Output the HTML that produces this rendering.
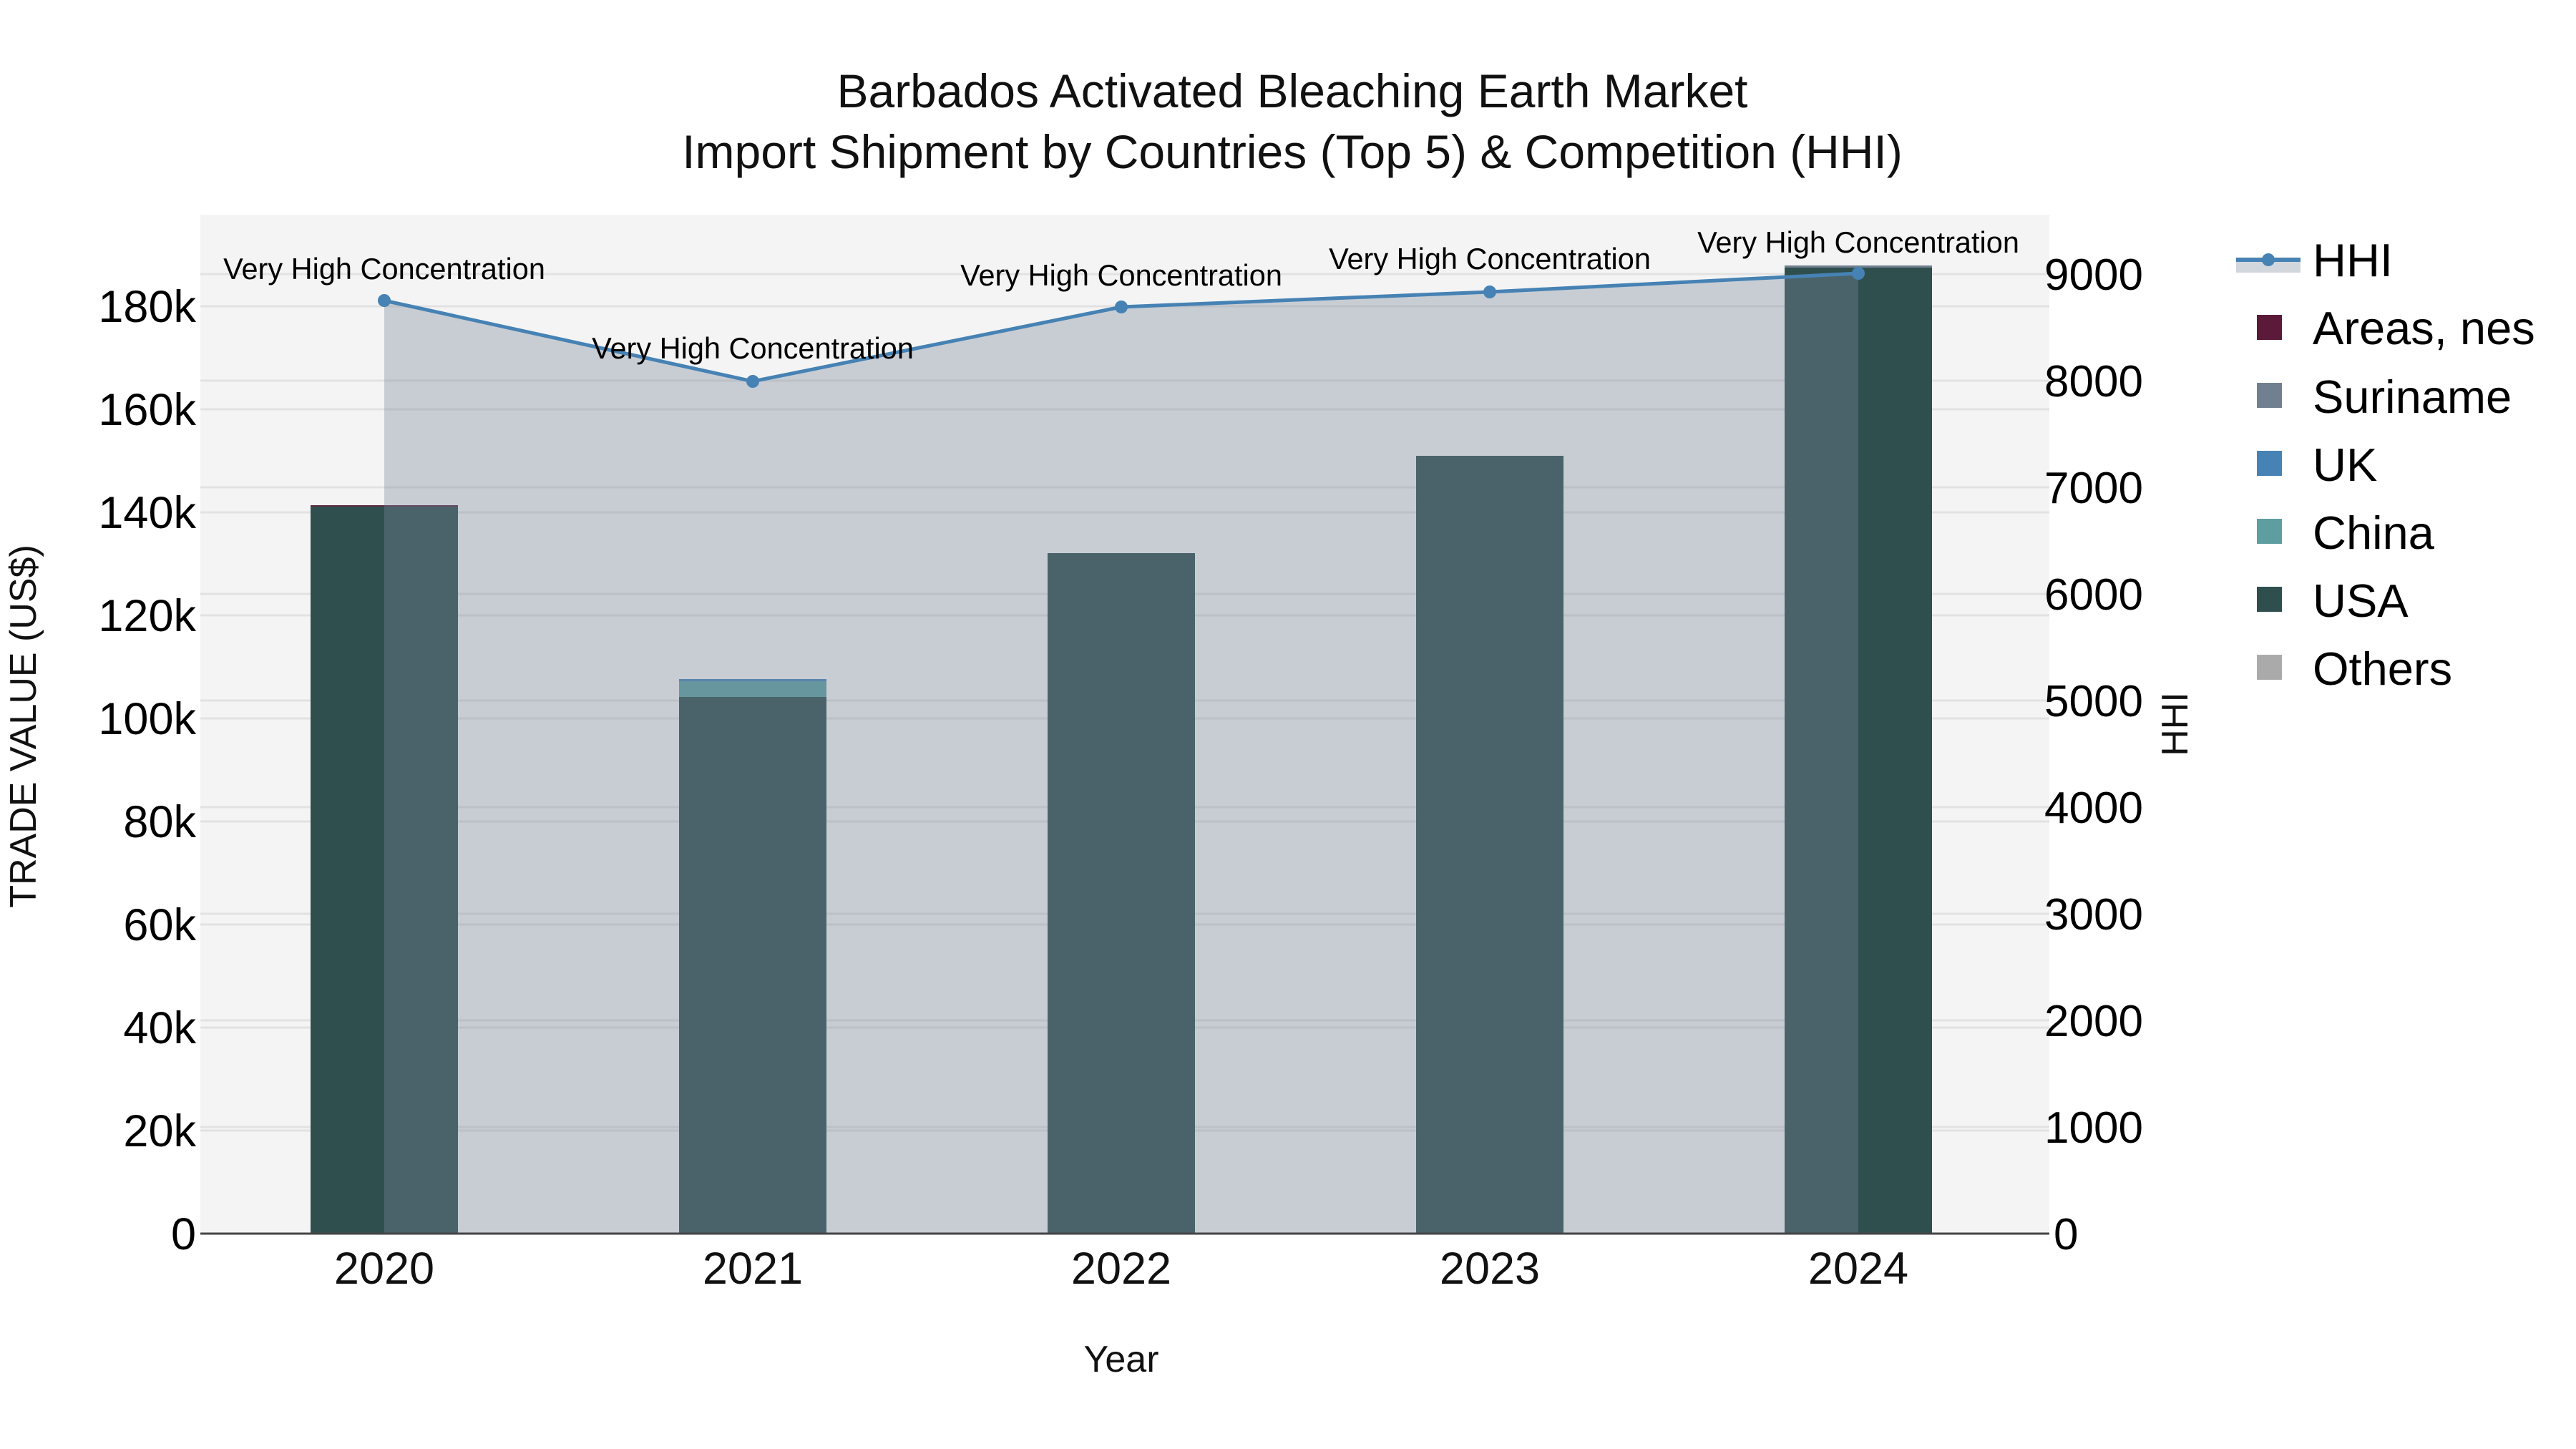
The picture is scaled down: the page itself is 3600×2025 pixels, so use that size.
<!DOCTYPE html>
<html><head><meta charset="utf-8"><style>
html,body{margin:0;padding:0;background:#fff;}
svg{display:block;font-family:"Liberation Sans",Arial,sans-serif;}
</style></head><body>
<svg width="3600" height="2025" viewBox="0 0 3600 2025" xmlns="http://www.w3.org/2000/svg">
<rect width="3600" height="2025" fill="#fff"/>
<rect x="280" y="300" width="2584" height="1424" fill="#f4f4f4"/>
<g stroke="#e2e2e2" stroke-width="3">
<line x1="280" x2="2864" y1="1580" y2="1580"/><line x1="280" x2="2864" y1="1436" y2="1436"/>
<line x1="280" x2="2864" y1="1292" y2="1292"/><line x1="280" x2="2864" y1="1148" y2="1148"/>
<line x1="280" x2="2864" y1="1004" y2="1004"/><line x1="280" x2="2864" y1="860" y2="860"/>
<line x1="280" x2="2864" y1="716" y2="716"/><line x1="280" x2="2864" y1="572" y2="572"/>
<line x1="280" x2="2864" y1="428" y2="428"/>
<line x1="280" x2="2864" y1="1575" y2="1575"/><line x1="280" x2="2864" y1="1426" y2="1426"/>
<line x1="280" x2="2864" y1="1277" y2="1277"/><line x1="280" x2="2864" y1="1128" y2="1128"/>
<line x1="280" x2="2864" y1="979" y2="979"/><line x1="280" x2="2864" y1="830" y2="830"/>
<line x1="280" x2="2864" y1="681" y2="681"/><line x1="280" x2="2864" y1="532" y2="532"/>
<line x1="280" x2="2864" y1="383" y2="383"/>
</g>
<rect x="434" y="707" width="206" height="1017" fill="#2f4f4f"/>
<rect x="434" y="706" width="206" height="2" fill="#5c2a44"/>
<rect x="949" y="974" width="206" height="750" fill="#2f4f4f"/>
<rect x="949" y="952" width="206" height="22" fill="#5f9ea0"/>
<rect x="949" y="949" width="206" height="3" fill="#4682b4"/>
<rect x="1464" y="773" width="206" height="951" fill="#2f4f4f"/>
<rect x="1979" y="637" width="206" height="1087" fill="#2f4f4f"/>
<rect x="2494" y="374" width="206" height="1350" fill="#2f4f4f"/>
<rect x="2494" y="371" width="206" height="3" fill="#708090"/>
<polygon points="537,420 1052,533 1567,429 2082,408 2597,382 2597,1724 537,1724" fill="rgb(122,136,155)" fill-opacity="0.36"/>
<line x1="280" x2="2864" y1="1724" y2="1724" stroke="#444" stroke-width="3"/>
<polyline points="537,420 1052,533 1567,429 2082,408 2597,382" fill="none" stroke="#4682b4" stroke-width="5"/>
<g fill="#4682b4"><circle cx="537" cy="420" r="9"/><circle cx="1052" cy="533" r="9"/><circle cx="1567" cy="429" r="9"/><circle cx="2082" cy="408" r="9"/><circle cx="2597" cy="382" r="9"/></g>
<g font-size="41.5" text-anchor="middle" fill="#000">
<text x="537" y="390">Very High Concentration</text>
<text x="1052" y="501">Very High Concentration</text>
<text x="1567" y="399">Very High Concentration</text>
<text x="2082" y="376">Very High Concentration</text>
<text x="2597" y="353">Very High Concentration</text>
</g>
<g font-size="66" text-anchor="middle" fill="#111">
<text x="1806" y="150">Barbados Activated Bleaching Earth Market</text>
<text x="1806" y="235">Import Shipment by Countries (Top 5) &amp; Competition (HHI)</text>
</g>
<g font-size="63" text-anchor="end" fill="#000">
<text x="274" y="1746">0</text><text x="274" y="1602">20k</text><text x="274" y="1458">40k</text>
<text x="274" y="1314">60k</text><text x="274" y="1170">80k</text><text x="274" y="1026">100k</text>
<text x="274" y="882">120k</text><text x="274" y="738">140k</text><text x="274" y="594">160k</text>
<text x="274" y="450">180k</text>
</g>
<g font-size="62" fill="#000">
<text x="2870" y="1746">0</text><text x="2857" y="1597">1000</text><text x="2857" y="1448">2000</text>
<text x="2857" y="1299">3000</text><text x="2857" y="1150">4000</text><text x="2857" y="1001">5000</text>
<text x="2857" y="852">6000</text><text x="2857" y="703">7000</text><text x="2857" y="554">8000</text>
<text x="2857" y="405">9000</text>
</g>
<g font-size="63" text-anchor="middle" fill="#111">
<text x="537" y="1794">2020</text><text x="1052" y="1794">2021</text><text x="1567" y="1794">2022</text>
<text x="2082" y="1794">2023</text><text x="2597" y="1794">2024</text>
</g>
<text x="1567" y="1917" font-size="52" text-anchor="middle" fill="#111">Year</text>
<text transform="translate(50,1015) rotate(-90)" font-size="52" text-anchor="middle" fill="#111">TRADE VALUE (US$)</text>
<text transform="translate(3057,1012) rotate(-90)" font-size="52" text-anchor="middle" fill="#111">HHI</text>
<rect x="3125" y="363" width="90" height="18" fill="#d2d7dd"/>
<line x1="3125" x2="3215" y1="363" y2="363" stroke="#4682b4" stroke-width="6"/>
<circle cx="3170" cy="363" r="9" fill="#4682b4"/>
<rect x="3154" y="440" width="35" height="35" fill="#5c1a3a"/>
<rect x="3154" y="535" width="35" height="35" fill="#708090"/>
<rect x="3154" y="630" width="35" height="35" fill="#4682b4"/>
<rect x="3154" y="725" width="35" height="35" fill="#5f9ea0"/>
<rect x="3154" y="820" width="35" height="35" fill="#2f4f4f"/>
<rect x="3154" y="915" width="35" height="35" fill="#aaaaaa"/>
<g font-size="65" fill="#000">
<text x="3232" y="386">HHI</text><text x="3232" y="481">Areas, nes</text><text x="3232" y="577">Suriname</text>
<text x="3232" y="672">UK</text><text x="3232" y="767">China</text><text x="3232" y="862">USA</text>
<text x="3232" y="957">Others</text>
</g>
</svg>
</body></html>
